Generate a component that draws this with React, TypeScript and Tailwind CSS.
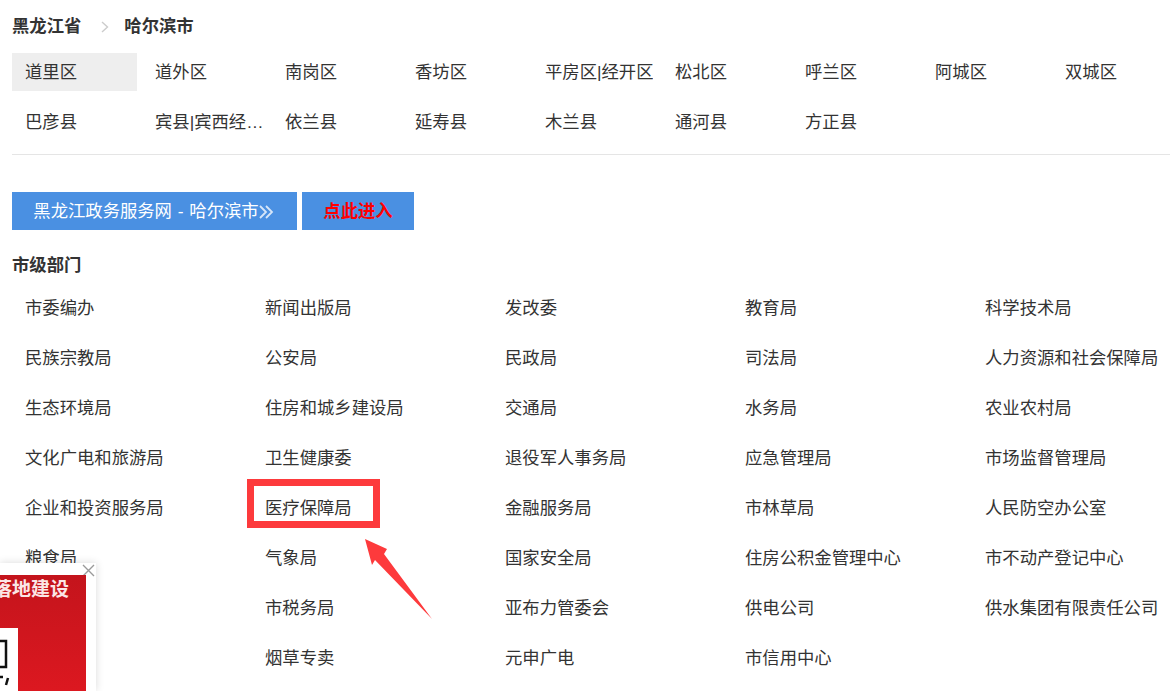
const districts = ["道里区","道外区","南岗区","香坊区","平房区|经开区","松北区","呼兰区","阿城区","双城区","巴彦县","宾县|宾西经开区","依兰县","延寿县","木兰县","通河县","方正县"];
const depts = ["市委编办","新闻出版局","发改委","教育局","科学技术局","民族宗教局","公安局","民政局","司法局","人力资源和社会保障局","生态环境局","住房和城乡建设局","交通局","水务局","农业农村局","文化广电和旅游局","卫生健康委","退役军人事务局","应急管理局","市场监督管理局","企业和投资服务局","医疗保障局","金融服务局","市林草局","人民防空办公室","粮食局","气象局","国家安全局","住房公积金管理中心","市不动产登记中心","","市税务局","亚布力管委会","供电公司","供水集团有限责任公司","","烟草专卖","元申广电","市信用中心",""];

export default function App() {
  return (
    <div className="relative h-[691px] w-[1170px] overflow-hidden bg-white pl-3 text-[17.33px] text-[#333] [font-family:'Liberation_Sans','Noto_Sans_CJK_SC',sans-serif]">
      <div className="flex h-[53px] items-center font-bold">
        <span>黑龙江省</span>
        <svg className="ml-[20px] mr-[15px] h-[12px] w-[8px]" viewBox="0 0 8 12" fill="none" stroke="#ccc" strokeWidth="1.4"><path d="M1 1l5.5 5L1 11" /></svg>
        <span>哈尔滨市</span>
      </div>
      <div className="grid grid-cols-[repeat(9,130px)] border-b border-[#e5e5e5] pb-px">
        {districts.map((d, i) => (
          <div key={d} className={`mb-3 flex h-[38px] w-[125px] items-center pl-[13px] ${i === 0 ? "bg-[#eeeeee]" : ""}`}>
            <span className="block truncate leading-[38px]">{d}</span>
          </div>
        ))}
      </div>
      <div className="mt-[37px] flex gap-[5px]">
        <div className="flex h-[38px] w-[285px] items-center justify-center bg-[#4a90e2] pt-px pr-[2px] text-white [word-spacing:1px]">
          <span>黑龙江政务服务网 - 哈尔滨市</span>
          <svg className="h-[14px] w-[15px]" viewBox="0 0 15 14" fill="none" stroke="#d6e6f9" strokeWidth="1.8"><path d="M1 1l6 6-6 6M7 1l6 6-6 6" /></svg>
        </div>
        <div className="flex h-[38px] w-[112px] items-center justify-center bg-[#4a90e2] pt-px font-bold text-[#ff0000]">点此进入</div>
      </div>
      <div className="mt-[22px] h-[26px] font-bold leading-[26px]">市级部门</div>
      <div className="mt-[6px] grid grid-cols-[repeat(5,240px)]">
        {depts.map((d, i) => (
          <div key={i} className="flex h-[50px] items-center whitespace-nowrap pl-[13px]">{d}</div>
        ))}
      </div>

      <div className="absolute left-[247px] top-[479px] h-[49px] w-[133px] border-[7px] border-[#fd3a3c]" />
      <svg className="absolute left-[360px] top-[535px]" width="80" height="90" viewBox="0 0 80 90">
        <path d="M5 4L27 14L24 19L72 84L15 25L12 30Z" fill="#fd3a3c" />
      </svg>

      <div className="absolute bottom-0 left-0 h-[128px] w-[96px] bg-white pt-3 shadow-[0_0_8px_rgba(0,0,0,0.15)]">
        <svg className="absolute left-[82px] top-[1px]" width="13" height="13" viewBox="0 0 13 13" stroke="#9a9a9a" strokeWidth="1.4"><path d="M1 1l11 11M12 1L1 12" /></svg>
        <div className="relative h-[116px] w-[86px] overflow-hidden bg-gradient-to-b from-[#c4141c] to-[#dc1820]">
          <div className="absolute right-[17px] top-[3px] whitespace-nowrap text-[19px] font-bold leading-[24px] text-[#fbe6e6]">落地建设</div>
          <div className="absolute left-0 top-[53px] h-[70px] w-[18px] bg-white">
            <svg className="absolute left-0 top-[11px]" width="18" height="50" viewBox="0 0 18 50" fill="none" stroke="#111" strokeWidth="2.5"><path d="M0 2H6V28H0" /><path d="M6 46l2-7" /><path d="M0 38h3" /></svg>
          </div>
        </div>
      </div>
    </div>
  );
}
